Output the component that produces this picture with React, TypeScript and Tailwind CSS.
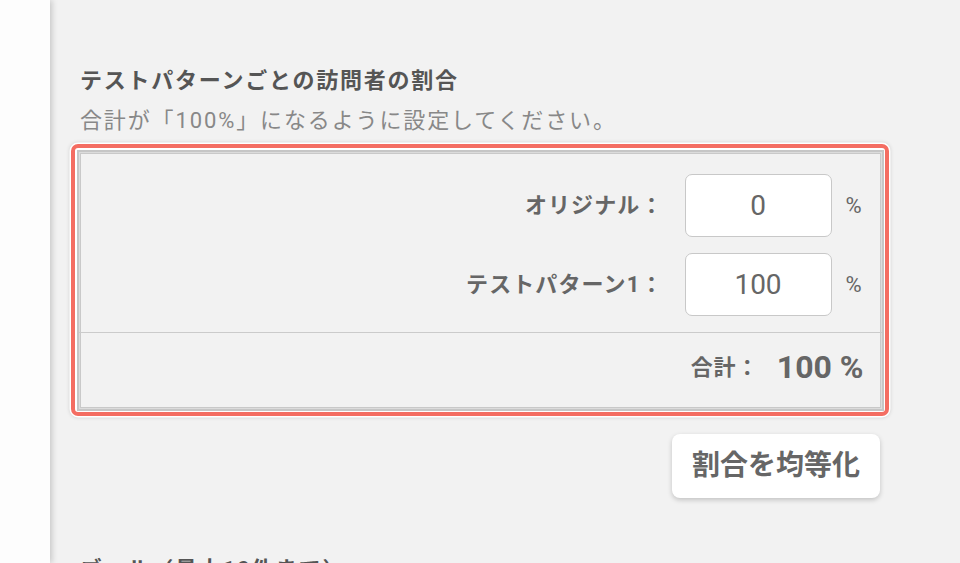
import { useState } from "react"

type Pattern = {
  id: string
  label: string
  value: string
}

const font = "font-['Roboto','Noto_Sans_CJK_JP',sans-serif]"

export default function App() {
  const [patterns, setPatterns] = useState<Pattern[]>([
    { id: "original", label: "オリジナル：", value: "0" },
    { id: "pattern-1", label: "テストパターン1：", value: "100" },
  ])

  const total = patterns.reduce((sum, p) => sum + (Number(p.value) || 0), 0)

  const equalize = () => {
    const each = Math.floor(100 / patterns.length)
    setPatterns((prev) =>
      prev.map((p, i) => ({
        ...p,
        value: String(i === prev.length - 1 ? 100 - each * (prev.length - 1) : each),
      })),
    )
  }

  return (
    <div className={`flex h-[563px] w-[960px] overflow-hidden bg-[#f2f2f2] ${font}`}>
      <aside className="w-[50px] shrink-0 bg-[#fdfdfd] shadow-[2px_0_6px_rgba(0,0,0,0.18)]" />

      <main className="flex w-[830px] flex-col pl-[30px]">
        <p className="-mt-[27px] text-[20px] leading-[30px] tracking-[0.08em] text-[#888]">
          ※ 配信する割合はパターンごとに設定できます。
        </p>

        <h2 className="mt-[62px] text-[22px] font-bold leading-[32px] tracking-[0.08em] text-[#555]">
          テストパターンごとの訪問者の割合
        </h2>
        <p className="mt-[8px] text-[22px] leading-[32px] tracking-[0.085em] text-[#888]">
          合計が「100%」になるように設定してください。
        </p>

        <div className="-mx-[9px] mt-[7px] rounded-[7px] border-[4px] border-[#f46d62] bg-white p-[1.5px] shadow-[0_0_0_1.5px_#fff,0_0_4px_1px_rgba(0,0,0,0.18)]">
          <div className="border-2 border-[#c6c6c6] bg-[#f2f2f2] shadow-[inset_0_0_0_1px_#dcdcdc,inset_0_0_0_2px_#c9c9c9]">
            <div className="flex flex-col gap-[16px] pb-[16px] pt-[22px]">
              {patterns.map((p) => (
                <div key={p.id} className="flex items-center">
                  <label
                    htmlFor={p.id}
                    className="flex-1 pr-[21px] text-right text-[22px] font-bold tracking-[0.05em] text-[#666]"
                  >
                    {p.label}
                  </label>
                  <input
                    id={p.id}
                    value={p.value}
                    onChange={(e) =>
                      setPatterns((prev) =>
                        prev.map((q) => (q.id === p.id ? { ...q, value: e.target.value } : q)),
                      )
                    }
                    className="h-[63px] w-[147px] rounded-[7px] border-[1.5px] border-[#c8c8c8] bg-white text-center text-[28px] text-[#666] outline-none"
                  />
                  <span className="w-[50px] pl-[14px] text-[22px] text-[#666]">%</span>
                </div>
              ))}
            </div>
            <div className="flex h-[77px] items-center justify-end border-t-[1.5px] border-[#cbcbcb] pb-[7px] pr-[18px]">
              <span className="text-[22px] font-bold tracking-[0.03em] text-[#666]">合計：</span>
              <span className="ml-[18px] text-[32px] font-bold text-[#666]">{total} %</span>
            </div>
          </div>
        </div>

        <div className="mt-[18px] flex justify-end">
          <button
            type="button"
            onClick={equalize}
            className="h-[64px] w-[208px] rounded-[8px] bg-white text-[28px] font-bold text-[#666] shadow-[0_2px_5px_rgba(0,0,0,0.2)]"
          >
            割合を均等化
          </button>
        </div>

        <h3 className="mt-[56px] text-[22px] font-bold leading-[32px] tracking-[0.08em] text-[#555]">
          ゴール（最大10件まで）
        </h3>
      </main>
    </div>
  )
}
